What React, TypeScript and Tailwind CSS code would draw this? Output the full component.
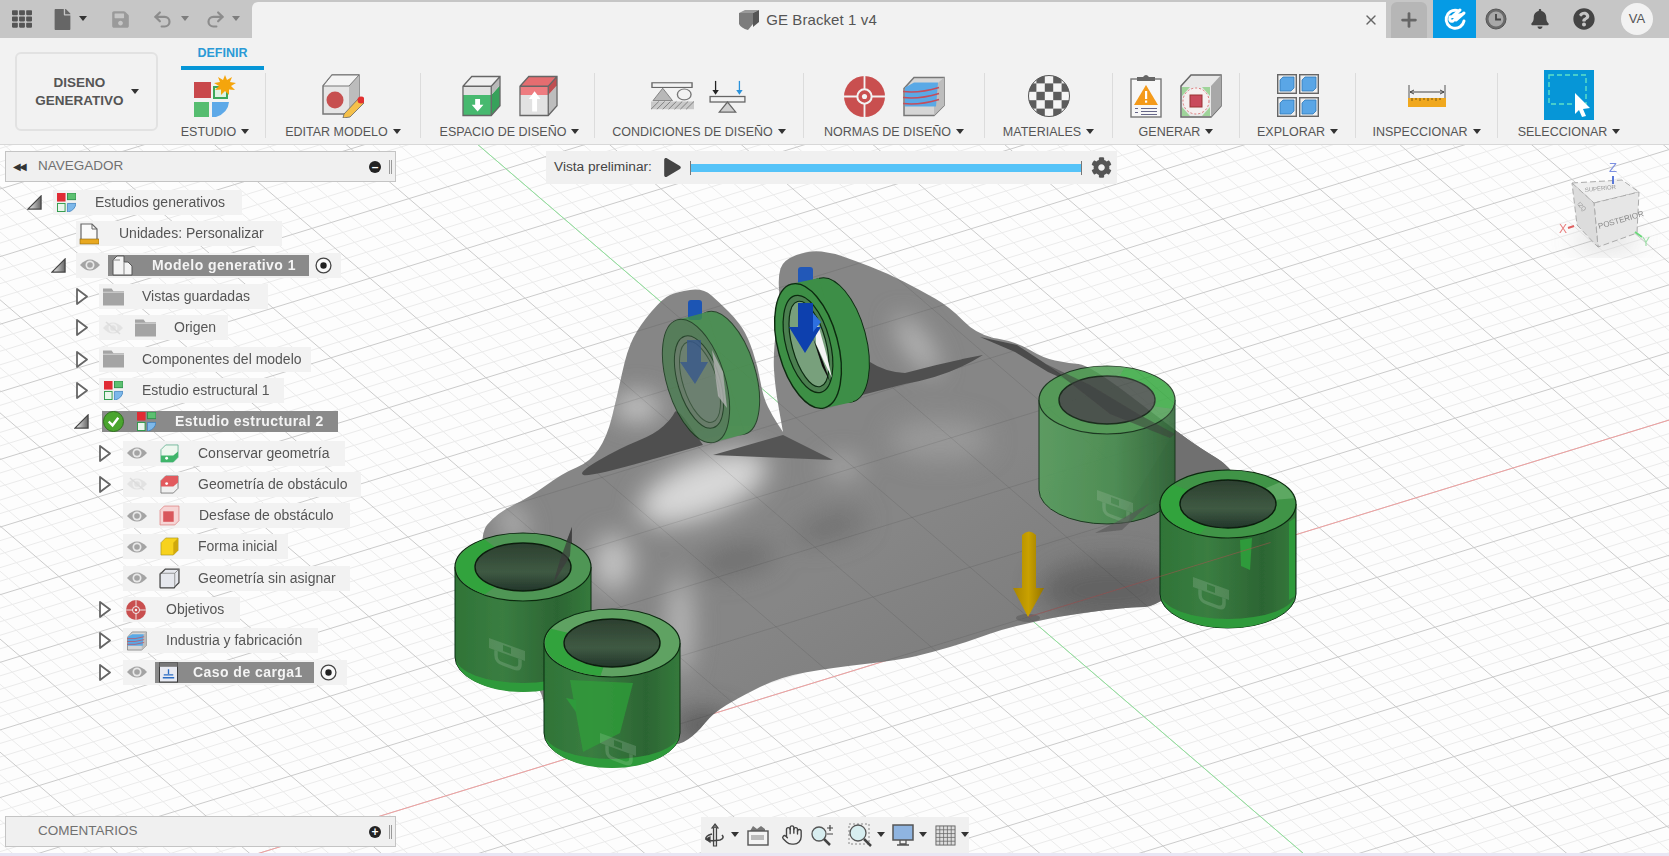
import { type ReactNode } from 'react';
import { Undo2, Redo2, Hand, X, Plus } from 'lucide-react';
import { FaBell, FaCog, FaFile, FaPlay, FaQuestionCircle, FaSave, FaTh } from 'react-icons/fa';

// ---------- ground grid, page coordinates ----------
const G = { x: 1028, y: 617 };
const U = { x: 58, y: 49.8 };
const V = { x: 97, y: -29.8 };

function gridPath(major: boolean) {
  let d = '';
  for (let i = -150; i <= 150; i++) {
    if ((i % 5 === 0) !== major) continue;
    const t = i / 5;
    const ax = G.x + t * U.x;
    const ay = G.y + t * U.y;
    d += `M${ax - 30 * V.x} ${ay - 30 * V.y}L${ax + 30 * V.x} ${ay + 30 * V.y}`;
    const bx = G.x + t * V.x;
    const by = G.y + t * V.y;
    d += `M${bx - 30 * U.x} ${by - 30 * U.y}L${bx + 30 * U.x} ${by + 30 * U.y}`;
  }
  return d;
}

// outline of the bracket; a point listed twice stays sharp
const BODY_PTS = [
  [477, 537], [497, 513], [530, 497], [563, 473], [590, 462], [607, 437], [617, 397], [627, 350], [640, 325],
  [663, 298], [677, 292], [703, 288], [720, 303], [737, 320], [748, 337], [758, 367], [763, 397], [773, 417],
  [783, 432], [783, 432], [775, 387], [773, 353], [780, 300], [778, 277], [783, 260], [810, 250], [833, 253],
  [853, 260], [887, 273], [920, 290], [950, 307], [977, 335], [1017, 342], [1043, 358], [1067, 363], [1090, 365],
  [1175, 430], [1200, 448], [1233, 468], [1260, 520], [1160, 607], [1130, 607], [1067, 615], [1033, 622],
  [1000, 630], [967, 642], [933, 652], [900, 660], [830, 668], [780, 677], [740, 697], [713, 713], [697, 733],
  [680, 745], [660, 745], [545, 727], [544, 690], [500, 640],
];

function smooth(pts: number[][]) {
  const mid = (a: number[], b: number[]) => `${(a[0] + b[0]) / 2} ${(a[1] + b[1]) / 2}`;
  let d = `M${mid(pts[0], pts[1])}`;
  for (let i = 1; i <= pts.length; i++) {
    const p = pts[i % pts.length];
    const n = pts[(i + 1) % pts.length];
    d += `Q${p[0]} ${p[1]} ${mid(p, n)}`;
  }
  return d + 'Z';
}

const BODY = smooth(BODY_PTS);

// a piece of a pad's top ring between two angles, in degrees, clockwise on screen
function ringArc(cx: number, cy: number, a0: number, a1: number) {
  const p = (rx: number, ry: number, a: number) => {
    const r = (a * Math.PI) / 180;
    return `${cx + rx * Math.cos(r)} ${cy + ry * Math.sin(r)}`;
  };
  const large = a1 - a0 > 180 ? 1 : 0;
  return `M${p(67, 33.5, a0)}A67 33.5 0 ${large} 1 ${p(67, 33.5, a1)}L${p(49, 24.5, a1)}A49 24.5 0 ${large} 0 ${p(49, 24.5, a0)}Z`;
}

// thin bright crescent along the foot of a pad
function footBand(cx: number, cy: number) {
  return `M${cx - 67} ${cy}A67 34 0 0 0 ${cx + 67} ${cy}A67 25 0 0 1 ${cx - 67} ${cy}Z`;
}

function Lock({ x, y }: { x: number; y: number }) {
  return (
    <g transform={`translate(${x} ${y}) skewY(20)`}>
      <path d="M0 0 H36 V10 H0 Z M14 2 V8 H22 V2 Z" fill="#fff" fillOpacity=".14" fillRule="evenodd" />
      <path d="M7 10 V15 Q7 21 14 21 H24 Q31 21 31 15 V10" fill="none" stroke="#fff" strokeOpacity=".15" strokeWidth="3.5" />
    </g>
  );
}

function Cylinder({
  cx,
  cy,
  top,
  side,
  hole = 'url(#holeFill)',
  patches,
  children,
}: {
  cx: number;
  cy: number;
  top: string;
  side: string;
  hole?: string;
  patches?: ReactNode;
  children?: ReactNode;
}) {
  const h = 90;
  return (
    <g>
      <path
        d={`M${cx - 68} ${cy} V${cy + h} A68 34 0 0 0 ${cx + 68} ${cy + h} V${cy} Z`}
        fill={side}
        stroke="#0d2e12"
        strokeWidth="1"
      />
      {children}
      <ellipse cx={cx} cy={cy} rx="68" ry="34" fill={top} stroke="#0c2a10" strokeWidth="1.2" />
      {patches}
      <ellipse cx={cx} cy={cy} rx="48" ry="24" fill={hole} stroke="#0b1f0e" strokeWidth="1.4" />
    </g>
  );
}

function Model() {
  return (
    <g>
      <path d={BODY} fill="url(#bodyFill)" />
      <g clipPath="url(#bodyClip)">
        <g filter="url(#soft)">
          <ellipse cx="637" cy="407" rx="24" ry="13" fill="#cfcfcf" />
          <ellipse cx="703" cy="488" rx="68" ry="28" fill="#d8d8d8" transform="rotate(-22 703 488)" />
          <ellipse cx="613" cy="563" rx="20" ry="28" fill="#c4c4c4" />
          <ellipse cx="513" cy="523" rx="9" ry="20" fill="#c4c4c4" transform="rotate(-25 513 523)" />
          <ellipse cx="680" cy="625" rx="10" ry="50" fill="#c6c6c6" />
          <ellipse cx="917" cy="345" rx="9" ry="34" fill="#c8c8c8" transform="rotate(-35 917 345)" />
          <ellipse cx="843" cy="467" rx="18" ry="8" fill="#bcbcbc" />
          <ellipse cx="737" cy="560" rx="40" ry="13" fill="#6c6c6c" transform="rotate(-12 737 560)" />
          <ellipse cx="830" cy="527" rx="36" ry="13" fill="#707070" transform="rotate(-15 830 527)" />
          <ellipse cx="1110" cy="590" rx="70" ry="30" fill="#646464" />
          <ellipse cx="703" cy="725" rx="30" ry="14" fill="#585858" />
          <ellipse cx="940" cy="440" rx="50" ry="20" fill="#9a9a9a" />
        </g>
        <path d={gridPath(true)} stroke="#000" strokeOpacity=".09" fill="none" />
        <path d={smooth([[577, 473], [590, 477], [703, 445], [703, 445], [677, 407], [672, 418], [655, 434], [620, 448]])} fill="#505050" />
        <path d="M713 455 L783 435 L833 460 Z" fill="#555" />
        <path d="M862 395 L905 384 Q950 376 983 355 Q945 362 905 373 Q885 372 870 362 Z" fill="#505050" />
        <path d="M980 337 L1017 345 L1043 362 L1075 384 L1048 372 L1015 352 Z" fill="#4c4c4c" />
        <path d="M572 527 L572 560 L550 585 Z" fill="#4c4c4c" />
        <path d="M1175 430 L1233 468 L1160 500 L1120 520 Z" fill="#707070" />
      </g>

      {/* back pad sits inside the body */}
      <g opacity=".86">
        <Cylinder
          cx={1107}
          cy={400}
          top="#4c9c52"
          side="url(#sideLight)"
          hole="#434b45"
          patches={<path d={ringArc(1107, 400, 285, 375)} fill="#35a83f" />}
        >
          <Lock x={1097} y={490} />
        </Cylinder>
      </g>
      <path d="M1046 364 L1090 385 L1140 415 L1175 434 L1170 438 L1110 414 Z" fill="#3c3c3c" opacity=".5" />
      <path d="M1095 533 L1120 520 L1150 503 L1122 530 Z" fill="#555" opacity=".6" />

      {/* blue stubs behind the lugs */}
      <rect x="688" y="300" width="14" height="20" rx="3" fill="#1f54b4" />
      <rect x="798" y="267" width="15" height="20" rx="3" fill="#2259b8" />

      {/* left lug, see-through */}
      <g opacity=".78">
        <ellipse cx="726" cy="373" rx="64" ry="29" transform="rotate(72.7 726 373)" fill="#3f9147" stroke="#0f3414" />
        <path d="M677 320 L707 312 L745 434 L715 442 Z" fill="#3f9147" />
        <ellipse cx="696" cy="381" rx="64" ry="29" transform="rotate(72.7 696 381)" fill="#4a7c4f" stroke="#0f3414" />
        <ellipse cx="699" cy="382" rx="48" ry="21" transform="rotate(72.7 699 382)" fill="#5f7a62" stroke="#0f3414" />
        <ellipse cx="700" cy="382" rx="42" ry="17" transform="rotate(72.7 700 382)" fill="#667f69" stroke="#2a4c2e" />
      </g>
      <path d="M712 350 L718 396 L727 408 L723 372 Z" fill="#b4b4b4" opacity=".8" />
      <path d="M687 340 H701 V362 H708 L695 384 L680 362 H687 Z" fill="#34568f" opacity=".75" />

      {/* right lug */}
      <ellipse cx="836" cy="340" rx="64" ry="30" transform="rotate(75 836 340)" fill="#3e8e46" stroke="#0d2e12" />
      <path d="M791 284 L819 278 L853 402 L825 408 Z" fill="#3e8e46" />
      <ellipse cx="808" cy="346" rx="64" ry="30" transform="rotate(75 808 346)" fill="#3d8f45" stroke="#0b2a10" strokeWidth="1.4" />
      <ellipse cx="808" cy="344" rx="50" ry="22" transform="rotate(75 808 344)" fill="#4b7f50" stroke="#0b2a10" strokeWidth="1.2" />
      <ellipse cx="809" cy="344" rx="44" ry="17" transform="rotate(75 809 344)" fill="#78a07c" stroke="#0b2a10" strokeWidth="1.2" />
      <path d="M815 315 Q826 350 832 378 Q824 362 816 344 Z" fill="#f4f4f4" />
      <path d="M813 338 Q824 362 830 382 L822 366 Z" fill="#111" />
      <path d="M798 303 H813 V327 H821 L805 353 L789 327 H798 Z" fill="#0f3fae" />
      <path d="M813 313 L821 322 L813 332 Z" fill="#2d6fe0" />

      <Cylinder
        cx={1228}
        cy={504}
        top="#3f9446"
        side="url(#sideDark)"
        patches={
          <>
            <path d={ringArc(1228, 504, 115, 215)} fill="#33a33d" />
            <path d={ringArc(1228, 504, 320, 350)} fill="#5da862" />
          </>
        }
      >
        <path d={footBand(1228, 594)} fill="#2f9a3a" />
        <path d="M1289 522 L1295 518 L1295 596 L1289 600 Z" fill="#2f9a3a" />
        <path d="M1240 540 L1252 538 L1250 570 L1241 566 Z" fill="#2f9a3a" />
        <Lock x={1193} y={577} />
      </Cylinder>

      <Cylinder
        cx={523}
        cy={567}
        top="#4f9654"
        side="url(#sideDark)"
        patches={<path d={ringArc(523, 567, 125, 235)} fill="#33a33d" />}
      >
        <path d={footBand(523, 658)} fill="#2f9a3a" />
        <Lock x={489} y={638} />
      </Cylinder>
      <path d="M572 527 L570 556 L553 584 L560 560 Z" fill="#3c3c3c" opacity=".7" />

      <Cylinder
        cx={612}
        cy={643}
        top="#5ea262"
        side="url(#sideDark)"
        patches={<path d={ringArc(612, 643, 100, 205)} fill="#33a33d" />}
      >
        <path d="M570 680 L633 683 L620 733 L583 752 Z" fill="#2f9a3a" opacity=".85" />
        <path d={footBand(612, 734)} fill="#2f9a3a" />
        <path d="M566 698 L576 700 L576 712 Z" fill="#2f9a3a" />
        <Lock x={600} y={733} />
      </Cylinder>

      {/* yellow load arrow */}
      <ellipse cx="1028" cy="618" rx="12" ry="4" fill="#555" opacity=".5" />
      <path d="M1022 535 Q1029 528 1036 535 V588 H1044 L1028 617 L1013 588 H1022 Z" fill="url(#gold)" />
    </g>
  );
}

function ViewCube() {
  return (
    <g>
      <ellipse cx="1606" cy="240" rx="34" ry="9" fill="#aaa" opacity=".45" filter="url(#soft)" />
      <path d="M1572 183 L1622 180 L1639 192 L1594 203 Z" fill="#efefef" stroke="#aaa" strokeDasharray="6 3" />
      <path d="M1594 203 L1639 192 L1637 233 L1598 247 Z" fill="#e6e6e6" stroke="#aaa" strokeDasharray="6 3" />
      <path d="M1572 183 L1594 203 L1598 247 L1577 225 Z" fill="#dcdcdc" stroke="#aaa" strokeDasharray="6 3" />
      <text x="1599" y="229" fontSize="8" fill="#888" transform="rotate(-16 1599 229)">POSTERIOR</text>
      <text x="1585" y="192" fontSize="6" fill="#999" transform="rotate(-6 1585 192)">SUPERIOR</text>
      <text x="1577" y="204" fontSize="6" fill="#999" transform="rotate(50 1577 204)">IZQ</text>
      <path d="M1613 176 V184" stroke="#5a78d8" strokeWidth="2" />
      <text x="1609" y="172" fontSize="13" fill="#7b8fe0">Z</text>
      <path d="M1574 226 L1568 228" stroke="#e06060" strokeWidth="2" />
      <text x="1559" y="233" fontSize="12" fill="#e88080">X</text>
      <path d="M1635 232 L1642 237" stroke="#6ad87a" strokeWidth="2" />
      <text x="1642" y="246" fontSize="12" fill="#9ee0a8">Y</text>
    </g>
  );
}

function Viewport3D() {
  return (
    <svg viewBox="0 145 1669 708" className="absolute inset-0 h-full w-full">
      <defs>
        <linearGradient id="bodyFill" x1="0" y1="0" x2="1" y2="1">
          <stop offset="0" stopColor="#868686" />
          <stop offset=".55" stopColor="#868686" />
          <stop offset="1" stopColor="#727272" />
        </linearGradient>
        <linearGradient id="sideLight" x1="0" y1="0" x2="1" y2="0">
          <stop offset="0" stopColor="#569f5c" />
          <stop offset=".55" stopColor="#478f4e" />
          <stop offset="1" stopColor="#2a6332" />
        </linearGradient>
        <linearGradient id="sideDark" x1="0" y1="0" x2="1" y2="0">
          <stop offset="0" stopColor="#2f7437" />
          <stop offset=".35" stopColor="#3a7d41" />
          <stop offset=".75" stopColor="#2c6533" />
          <stop offset="1" stopColor="#357a3c" />
        </linearGradient>
        <linearGradient id="holeFill" x1="0" y1="0" x2="0" y2="1">
          <stop offset="0" stopColor="#2c3f2f" />
          <stop offset=".6" stopColor="#3f5a43" />
          <stop offset="1" stopColor="#22352a" />
        </linearGradient>
        <linearGradient id="gold" x1="0" y1="0" x2="1" y2="0">
          <stop offset="0" stopColor="#a98500" />
          <stop offset=".5" stopColor="#c9a106" />
          <stop offset="1" stopColor="#947400" />
        </linearGradient>
        <filter id="soft" x="-50%" y="-50%" width="200%" height="200%">
          <feGaussianBlur stdDeviation="13" />
        </filter>
        <filter id="aa">
          <feGaussianBlur stdDeviation=".5" />
        </filter>
        <clipPath id="bodyClip">
          <path d={BODY} />
        </clipPath>
      </defs>
      <rect x="0" y="145" width="1669" height="711" fill="#fdfdfd" />
      <path d={gridPath(false)} stroke="#ebebeb" fill="none" />
      <path d={gridPath(true)} stroke="#cbcbcb" fill="none" />
      <path d={`M${G.x - 11 * U.x} ${G.y - 11 * U.y}L${G.x + 5 * U.x} ${G.y + 5 * U.y}`} stroke="#8fe39a" />
      <path d={`M${G.x - 10 * V.x} ${G.y - 10 * V.y}L${G.x + 10 * V.x} ${G.y + 10 * V.y}`} stroke="#f0a0a0" />
      <g filter="url(#aa)">
        <Model />
        <path d={`M${G.x} ${G.y}L${G.x + 2.5 * V.x} ${G.y + 2.5 * V.y}`} stroke="#b05050" strokeOpacity=".5" />
        <ViewCube />
      </g>
    </svg>
  );
}

// ---------- toolbar icons ----------
function StudyIcon() {
  return (
    <svg viewBox="0 0 42 42" className="h-[42px] w-[42px]">
      <rect x="0" y="7" width="17" height="16" fill="#c9494c" />
      <rect x="0" y="27" width="15" height="15" fill="#56bd70" />
      <path d="M18 27 H35 Q34 38 22 42 H18 Z" fill="#5da9e8" />
      <rect x="20" y="12" width="13" height="11" fill="#dff2e2" stroke="#3ea75a" strokeWidth="2" />
      <path d="M31 0 L33 5 L38 2 L36 7 L42 8 L37 11 L41 15 L35 14.500 L35 20 L31 16 L27 20 L27 14.500 L21 15 L25 11 L20 8 L26 7 L24 2 L29 5 Z" fill="#f5a50c" />
    </svg>
  );
}

function MiniStudy({ size = 'h-[19px] w-[19px]' }: { size?: string }) {
  return (
    <svg viewBox="0 0 20 20" className={size}>
      <rect x="0" y="0" width="9" height="9" fill="#e02b34" />
      <rect x="11" y="0" width="9" height="7" fill="#5cc070" stroke="#2f8f4a" />
      <rect x=".5" y="11" width="8" height="8.500" fill="#eaf6ec" stroke="#2f9a4a" />
      <path d="M11 11 H20 Q19 18 12 20 H11 Z" fill="#7db8ea" stroke="#3b7fbd" strokeWidth=".8" />
    </svg>
  );
}

function EditModelIcon() {
  return (
    <svg viewBox="0 0 42 44" className="h-[44px] w-[42px]">
      <path d="M1 12 L10 1 H37 V30 L27 40 H1 Z" fill="#e6e6e6" stroke="#777" strokeWidth="1.5" />
      <path d="M27 12 L37 1 V30 L27 40 Z" fill="#bcbcbc" />
      <path d="M1 12 H27 L37 1 H10 Z" fill="#f4f4f4" stroke="#777" />
      <circle cx="13" cy="26" r="8.500" fill="#c75050" />
      <path d="M22 40 L37 24 L42 29 L28 43 L21 44 Z" fill="#f5c04a" stroke="#666" strokeWidth=".8" />
      <circle cx="39" cy="26" r="3.500" fill="#e23030" />
    </svg>
  );
}

function SpaceIcon({ up }: { up?: boolean }) {
  const midY = 20;
  return (
    <svg viewBox="0 0 40 42" className="h-[42px] w-[39px]">
      <path d={`M1 ${midY} V41 H30 V${midY} Z`} fill={up ? '#e2e2e2' : '#47b96f'} />
      <path d={`M30 ${midY} V41 L39 31 V10 Z`} fill={up ? '#bdbdbd' : '#37a15b'} />
      <path d={`M1 ${midY} V11 H30 V${midY} Z`} fill={up ? '#ee7c80' : '#e2e2e2'} />
      <path d="M1 11 L10 1 H39 L30 11 Z" fill={up ? '#e56d70' : '#f0f0f0'} />
      <path d={`M30 11 L39 1 V10 L30 ${midY} Z`} fill={up ? '#bf4f52' : '#b9b9b9'} />
      <path d="M1 11 L10 1 H39 V31 L30 41 H1 Z M1 11 H30 V41 M30 11 L39 1" fill="none" stroke="#666" strokeWidth="1.3" />
      {up ? (
        <path d="M16 16 L22 24 H18.500 V37 H13.500 V24 H10 Z" fill="#fff" />
      ) : (
        <path d="M13.500 24 H18.500 V30 H22 L16 37 L10 30 H13.500 Z" fill="#fff" />
      )}
    </svg>
  );
}

function SupportIcon() {
  return (
    <svg viewBox="0 0 44 36" preserveAspectRatio="none" className="h-[28px] w-[43px]">
      <rect x="1" y="1" width="41" height="6" fill="#f2f2f2" stroke="#666" strokeWidth="1.4" />
      <path d="M12 8 L2 24 H22 Z" fill="#b8b8b8" stroke="#777" />
      <circle cx="34" cy="16" r="7" fill="#f2f2f2" stroke="#777" strokeWidth="1.4" />
      <rect x="0" y="25" width="44" height="10" fill="#c9c9c9" />
      <path d="M0 35 L8 25 M6 35 L14 25 M12 35 L20 25 M18 35 L26 25 M24 35 L32 25 M30 35 L38 25 M36 35 L44 25" stroke="#777" />
    </svg>
  );
}

function LoadIcon() {
  return (
    <svg viewBox="0 0 40 36" className="-ml-[4px] h-[33px] w-[39px]">
      <path d="M7 1 V13" stroke="#222" strokeWidth="1.4" />
      <path d="M3.500 11 H10.500 L7 16 Z" fill="#222" />
      <path d="M33 1 V13" stroke="#2a93dc" strokeWidth="1.4" />
      <path d="M29.500 11 H36.500 L33 16 Z" fill="#2a93dc" />
      <rect x="1" y="18" width="38" height="6" fill="#f2f2f2" stroke="#666" strokeWidth="1.4" />
      <path d="M20 24 L11 35 H29 Z" fill="#cfcfcf" stroke="#666" strokeWidth="1.3" />
    </svg>
  );
}

function TargetIcon({ size = 'h-[41px] w-[41px]' }: { size?: string }) {
  return (
    <svg viewBox="0 0 40 40" className={size}>
      <circle cx="20" cy="20" r="20" fill="#c94f4f" />
      <path d="M20 0 V40 M0 20 H40" stroke="#f2f2f2" strokeWidth="1.8" />
      <circle cx="20" cy="20" r="7" fill="#c94f4f" stroke="#f2f2f2" strokeWidth="2" />
      <circle cx="20" cy="20" r="2.500" fill="#f2f2f2" />
    </svg>
  );
}

function LayersIcon({ size = 'h-[41px] w-[42px]' }: { size?: string }) {
  return (
    <svg viewBox="0 0 42 40" className={size}>
      <path d="M1 12 L11 1 H41 V29 L31 39 H1 Z" fill="#d6d6d6" stroke="#777" strokeWidth="1.5" />
      <path d="M31 10 L41 1 V29 L31 39 Z" fill="#bdbdbd" />
      <path d="M2 11 L11 6 H35 L33 30 H2 Z" fill="#5aa9e6" />
      <path d="M0 15 Q16 17 36 11 M0 21 Q16 23 36 17 M0 27 Q16 29 36 23" stroke="#c44d5c" strokeWidth="1.5" fill="none" />
    </svg>
  );
}

function CheckerIcon() {
  const cells = [];
  for (let r = 0; r < 5; r++) {
    for (let c = 0; c < 5; c++) {
      if ((r + c) % 2 === 1) cells.push(<rect key={`${r}-${c}`} x={c * 8.4} y={r * 8.4} width="8.400" height="8.400" fill="#5c5c5c" />);
    }
  }
  return (
    <svg viewBox="0 0 42 42" className="h-[42px] w-[42px]">
      <clipPath id="ball">
        <circle cx="21" cy="21" r="20.500" />
      </clipPath>
      <g clipPath="url(#ball)">
        <rect width="42" height="42" fill="#f4f4f4" />
        {cells}
      </g>
      <circle cx="21" cy="21" r="20.500" fill="none" stroke="#555" />
    </svg>
  );
}

function ReportIcon() {
  return (
    <svg viewBox="0 0 32 44" className="h-[44px] w-[32px]">
      <rect x="1" y="5" width="30" height="38" fill="#f7f7f7" stroke="#777" strokeWidth="1.4" />
      <path d="M7 3 H13 Q16 -1 19 3 H25 V7 H7 Z" fill="#666" />
      <path d="M16 11 L28 31 H4 Z" fill="#f49a1a" />
      <rect x="15" y="17" width="2.200" height="8" fill="#fff" />
      <rect x="15" y="26.500" width="2.200" height="2.200" fill="#fff" />
      <path d="M11 34.500 H27 M11 37.500 H27 M11 40.500 H27 M5 34.500 H8 M5 38.500 H8" stroke="#668" strokeWidth="1" />
    </svg>
  );
}

function GenerateIcon() {
  return (
    <svg viewBox="0 0 42 44" className="h-[44px] w-[42px]">
      <path d="M1 12 L11 1 H41 V32 L31 43 H1 Z" fill="#e8e8e8" stroke="#666" strokeWidth="1.5" />
      <path d="M31 12 L41 1 V32 L31 43 Z" fill="#a8a8a8" />
      <path d="M2 13 H10 L2 22 Z M30 13 H22 L30 22 Z M2 42 H10 L2 33 Z M30 42 H22 L30 33 Z" fill="#9fd49a" />
      <circle cx="16" cy="27" r="13" fill="#f5f0f0" stroke="#d77" strokeDasharray="2 2" />
      <rect x="10" y="21" width="12" height="12" fill="#c94a5c" stroke="#933" />
    </svg>
  );
}

function ExploreIcon() {
  const tile = (x: number, y: number) => (
    <g key={`${x}${y}`} transform={`translate(${x} ${y})`}>
      <rect x=".7" y=".7" width="18.600" height="18.600" fill="#efefef" stroke="#666" strokeWidth="1.4" />
      <path d="M3 6 L6 3 H17 V14 L14 17 H3 Z" fill="#5aa6e6" stroke="#2f78b8" strokeWidth=".8" />
    </g>
  );
  return (
    <svg viewBox="0 0 42 44" className="h-[44px] w-[42px]">
      {tile(0, 0)}
      {tile(22, 0)}
      {tile(0, 23)}
      {tile(22, 23)}
    </svg>
  );
}

function MeasureIcon() {
  return (
    <svg viewBox="0 0 38 22" className="h-[22px] w-[38px]">
      <path d="M1 0 V13 M37 0 V13" stroke="#555" />
      <path d="M2 7 H36 M2 7 L6 5 M2 7 L6 9 M36 7 L32 5 M36 7 L32 9" stroke="#444" fill="none" />
      <rect x="0" y="13" width="38" height="9" fill="#f0a81e" />
      <path d="M4 13 V16 M8 13 V15 M12 13 V16 M16 13 V15 M20 13 V16 M24 13 V15 M28 13 V16 M32 13 V15" stroke="#7a5a10" />
    </svg>
  );
}

function SelectIcon() {
  return (
    <svg viewBox="0 0 50 50" className="-mt-[2px] h-[50px] w-[50px]">
      <rect width="50" height="50" fill="#0696d7" />
      <rect x="5" y="5" width="37" height="29" fill="none" stroke="#5fe0c8" strokeWidth="1.4" strokeDasharray="5 3" />
      <path d="M31 24 L46 39 L39 40 L42 47 L38 48 L35 41 L31 45 Z" fill="#fff" transform="translate(0 -1)" />
    </svg>
  );
}

// ---------- small tree icons ----------
function TriDown() {
  return (
    <svg viewBox="0 0 16 16" className="h-[15px] w-[15px] shrink-0">
      <defs>
        <linearGradient id="tri" x1="0" y1="0" x2="1" y2="0">
          <stop offset="0" stopColor="#f4f4f4" />
          <stop offset="1" stopColor="#666" />
        </linearGradient>
      </defs>
      <path d="M1 15 L15 1 V15 Z" fill="url(#tri)" stroke="#444" strokeWidth="1.3" />
    </svg>
  );
}

function Chevron() {
  return (
    <svg viewBox="0 0 12 17" className="h-[17px] w-[12px] shrink-0">
      <path d="M1 1 L11 8.500 L1 16 Z" fill="#fff" stroke="#666" strokeWidth="1.8" strokeLinejoin="round" />
    </svg>
  );
}

function Eye({ off }: { off?: boolean }) {
  return (
    <svg viewBox="0 0 20 14" className={`h-[14px] w-[20px] shrink-0 ${off ? 'opacity-20' : ''}`}>
      <path d="M0 7 Q10 -4 20 7 Q10 18 0 7 Z" fill="#a4a4a4" />
      <circle cx="10" cy="7" r="4.500" fill="#e8e8e8" />
      <circle cx="10" cy="7" r="2.800" fill="#a4a4a4" />
      {off && <path d="M3 1 L17 13" stroke="#888" strokeWidth="1.6" />}
    </svg>
  );
}

function Radio() {
  return (
    <svg viewBox="0 0 16 16" className="h-[17px] w-[17px] shrink-0">
      <circle cx="8" cy="8" r="7" fill="#fafafa" stroke="#444" strokeWidth="1.2" />
      <circle cx="8" cy="8" r="3" fill="#222" />
    </svg>
  );
}

function Folder() {
  return (
    <svg viewBox="0 0 22 18" className="h-[18px] w-[21px] shrink-0">
      <path d="M0 0 H9 L11 3 H22 V18 H0 Z" fill="#a4a4a4" />
      <path d="M0 4 H22" stroke="#d8d8d8" />
    </svg>
  );
}

function Tiny({ kind }: { kind: 'keep' | 'obst' | 'offset' | 'start' | 'free' }) {
  if (kind === 'offset') {
    return (
      <svg viewBox="0 0 20 20" className="h-[21px] w-[21px] shrink-0">
        <path d="M1 5 L5 1 H19 V15 L15 19 H1 Z" fill="#f6d5d5" stroke="#e08a8a" strokeWidth=".8" />
        <rect x="4" y="6" width="10" height="10" fill="#d9575c" />
      </svg>
    );
  }
  if (kind === 'start') {
    return (
      <svg viewBox="0 0 20 20" className="h-[19px] w-[19px] shrink-0">
        <path d="M1 6 L6 1 H19 V14 L14 19 H1 Z" fill="#f7d21d" stroke="#99881a" strokeWidth=".6" />
        <path d="M14 6 L19 1 V14 L14 19 Z" fill="#d0a80d" />
      </svg>
    );
  }
  if (kind === 'free') {
    return (
      <svg viewBox="0 0 20 20" className="h-[21px] w-[21px] shrink-0">
        <path d="M1 6 Q1 5 2 5 L6 1 H19 V14 L15 18 Q15 19 14 19 H2 Q1 19 1 18 Z" fill="#e6e8ee" stroke="#444" strokeWidth="1.2" />
        <path d="M15 5 L19 1 M15 5 V18 M15 5 H1" fill="none" stroke="#777" strokeWidth=".7" />
      </svg>
    );
  }
  const keep = kind === 'keep';
  return (
    <svg viewBox="0 0 20 20" className="h-[19px] w-[19px] shrink-0">
      <path d="M1 6 L6 1 H19 V14 L14 19 H1 Z" fill={keep ? '#eef7ef' : '#f0f0f0'} stroke={keep ? '#5a8' : '#666'} strokeWidth=".8" />
      <path d={keep ? 'M1 12 H14 V19 H1 Z M14 12 L19 8 V14 L14 19 Z' : 'M1 6 H14 V12 H1 Z M1 6 L6 1 H19 L14 6 Z M14 6 L19 1 V8 L14 12 Z'} fill={keep ? '#3fb56a' : '#e25a5e'} />
      <circle cx="7" cy={keep ? 15 : 9} r="1.500" fill="#fff" />
    </svg>
  );
}

// ---------- tree rows ----------
function Row({ className, children }: { className: string; children: ReactNode }) {
  return <div className={`flex h-[31.3px] items-center ${className}`}>{children}</div>;
}

function Pill({ className, children }: { className: string; children: ReactNode }) {
  return <div className={`flex h-[25px] items-center bg-[#f2f2f2] text-[14px] text-[#555] ${className}`}>{children}</div>;
}

function Active({ className, children }: { className: string; children: ReactNode }) {
  return <div className={`flex h-[21px] items-center bg-[#8a8a8a] text-[14px] font-bold tracking-[0.45px] text-[#f4f4f4] ${className}`}>{children}</div>;
}

function Caret({ className = 'ml-[5px]' }: { className?: string }) {
  return <span className={`inline-block h-0 w-0 -translate-y-px border-x-[4px] border-t-[5px] border-x-transparent border-t-[#333] ${className}`} />;
}

function Group({ className, label, children }: { className: string; label: string; children: ReactNode }) {
  return (
    <div className={`flex h-[65px] flex-col items-center border-r border-[#dcdcdc] ${className}`}>
      <div className="flex h-[46px] shrink-0 items-center gap-[18px]">{children}</div>
      <div className="mt-[5px] flex h-[17px] shrink-0 items-center text-[12.5px] whitespace-nowrap text-[#555]">
        {label}
        <Caret />
      </div>
    </div>
  );
}

function TopBar() {
  return (
    <div className="flex h-[38px] shrink-0 items-stretch bg-[#c6c6c6] text-[#666]">
      <div className="flex w-[252px] items-center">
        <FaTh className="ml-[12px] h-[20px] w-[20px] text-[#555]" />
        <FaFile className="ml-[22px] h-[21px] w-[17px] text-[#666]" />
        <Caret className="ml-[8px] text-[#555]" />
        <FaSave className="ml-[24px] h-[19px] w-[19px] text-[#9a9a9a]" />
        <Undo2 className="ml-[22px] h-[21px] w-[21px] text-[#8c8c8c]" strokeWidth={2.5} />
        <Caret className="ml-[8px] opacity-50" />
        <Redo2 className="ml-[16px] h-[21px] w-[21px] text-[#8c8c8c]" strokeWidth={2.5} />
        <Caret className="ml-[6px] opacity-50" />
      </div>
      <div className="mt-[2px] flex w-[1134px] items-center rounded-tl-md bg-[#f2f2f2] pr-[7px]">
        <div className="flex flex-1 items-center justify-center gap-[6px] text-[15px] tracking-[0.1px] text-[#555]">
          <svg viewBox="0 0 22 20" className="h-[20px] w-[22px]">
            <path d="M1 3 L7 0 H21 L15 3 Z" fill="#9a9a9a" />
            <path d="M1 3 H15 V14 L10 20 Q3 18 1 14 Z" fill="#7c7c7c" />
            <path d="M15 3 L21 0 V12 L15 17 Z" fill="#555" />
          </svg>
          GE Bracket 1 v4
        </div>
        <X className="h-[16px] w-[16px] text-[#666]" strokeWidth={2} />
      </div>
      <div className="mt-[2px] ml-[5px] flex w-[36px] items-center justify-center rounded-t-md bg-[#b6b6b6]">
        <Plus className="h-[22px] w-[22px] text-[#666]" strokeWidth={3} />
      </div>
      <div className="ml-[6px] flex w-[43px] items-center justify-center bg-[#059be5]">
        <svg viewBox="0 0 24 24" className="h-[24px] w-[24px]" fill="none" stroke="#fff" strokeWidth="3" strokeLinecap="round">
          <path d="M14 3.500 A9 9 0 1 0 21 14" />
          <path d="M10 9 L17 3 M13 13 L21 6 M16 8 L10 14 Q6 15 7 10 Z" />
        </svg>
      </div>
      <div className="ml-[9px] flex items-center">
        <svg viewBox="0 0 22 22" className="h-[22px] w-[22px]">
          <circle cx="11" cy="11" r="10" fill="#6a6a6a" stroke="#555" />
          <circle cx="11" cy="11" r="7.500" fill="#a8a8a8" />
          <path d="M11 6 V11.500 H16" fill="none" stroke="#444" strokeWidth="1.800" />
        </svg>
        <FaBell className="ml-[23px] h-[20px] w-[20px] text-[#444]" />
        <FaQuestionCircle className="ml-[23px] h-[22px] w-[22px] text-[#444]" />
        <div className="ml-[26px] flex h-[32px] w-[32px] items-center justify-center rounded-full bg-[#f2f2f2] text-[13px] text-[#555]">VA</div>
      </div>
    </div>
  );
}

function Toolbar() {
  return (
    <div className="flex h-[107px] shrink-0 border-b border-[#d8d8d8] bg-[#f2f2f2]">
      <div className="w-[165px] shrink-0 pt-[14px] pl-[15px]">
        <div className="relative flex h-[79px] w-[143px] items-center rounded-md border-2 border-[#e2e2e2] pr-[14px] text-center text-[13.5px] leading-[18px] font-bold text-[#555]">
          <div className="flex-1">
            DISENO
            <br />
            GENERATIVO
          </div>
          <span className="absolute top-[35px] right-[17px] h-0 w-0 border-x-[4px] border-t-[5px] border-x-transparent border-t-[#333]" />
        </div>
      </div>
      <div className="flex-1">
        <div className="ml-[16px] flex h-[32px] w-[83px] flex-col items-center justify-between">
          <span className="pt-[6px] text-[12.5px] font-bold text-[#2a9ad6]">DEFINIR</span>
          <span className="h-[4px] w-full bg-[#0696d7]" />
        </div>
        <div className="mt-[3px] flex">
          <Group className="w-[101px]" label="ESTUDIO">
            <StudyIcon />
          </Group>
          <Group className="w-[155px]" label="EDITAR MODELO">
            <EditModelIcon />
          </Group>
          <Group className="w-[174px] pl-[4px]" label="ESPACIO DE DISEÑO">
            <SpaceIcon />
            <SpaceIcon up />
          </Group>
          <Group className="w-[209px]" label="CONDICIONES DE DISEÑO">
            <SupportIcon />
            <LoadIcon />
          </Group>
          <Group className="w-[181px]" label="NORMAS DE DISEÑO">
            <TargetIcon />
            <LayersIcon />
          </Group>
          <Group className="w-[128px]" label="MATERIALES">
            <CheckerIcon />
          </Group>
          <Group className="w-[127px]" label="GENERAR">
            <ReportIcon />
            <GenerateIcon />
          </Group>
          <Group className="w-[116px]" label="EXPLORAR">
            <ExploreIcon />
          </Group>
          <Group className="w-[142px]" label="INSPECCIONAR">
            <MeasureIcon />
          </Group>
          <Group className="w-[142px] border-r-0" label="SELECCIONAR">
            <SelectIcon />
          </Group>
        </div>
      </div>
    </div>
  );
}

function PanelHeader({ label, sign, back }: { label: string; sign: string; back?: boolean }) {
  return (
    <div className="ml-[5px] flex h-[31px] w-[391px] items-center border border-[#c4c4c4] bg-[#f0f0f0] text-[13.5px] text-[#707070]">
      <span className={`ml-[7px] w-[20px] text-[10px] tracking-[-2px] text-[#333] ${back ? '' : 'opacity-0'}`}>◀◀</span>
      <span className="ml-[5px] flex-1">{label}</span>
      <span className="flex h-[12px] w-[12px] items-center justify-center rounded-full bg-[#222] text-[12px] leading-none font-bold text-white">{sign}</span>
      <span className="mr-[3px] ml-[8px] h-[14px] w-[3px] border-x border-[#999]" />
    </div>
  );
}

function Navigator() {
  return (
    <div className="w-[400px]">
      <PanelHeader label="NAVEGADOR" sign="–" back />
      <div className="mt-[5px]">
        <Row className="pl-[27px]">
          <TriDown />
          <Pill className="ml-[11px] w-[189px] pl-[4px]">
            <MiniStudy />
            <span className="ml-[19px]">Estudios generativos</span>
          </Pill>
        </Row>
        <Row className="pl-[76px]">
          <Pill className="w-[206px] pl-[3px]">
            <svg viewBox="0 0 20 22" className="h-[22px] w-[20px] shrink-0">
              <path d="M2 1 H13 L18 6 V17 H2 Z" fill="#fafafa" stroke="#666" strokeWidth="1.2" />
              <path d="M13 1 V6 H18" fill="none" stroke="#666" />
              <rect x="1" y="16" width="19" height="5" fill="#e8a820" stroke="#8a6510" strokeWidth=".6" />
            </svg>
            <span className="ml-[20px]">Unidades: Personalizar</span>
          </Pill>
        </Row>
        <Row className="pl-[51px]">
          <TriDown />
          <Pill className="ml-[10px] w-[265px] pl-[4px]">
            <Eye />
            <Active className="ml-[8px] w-[201px] pl-[4px]">
              <svg viewBox="0 0 21 21" className="h-[21px] w-[21px] shrink-0">
                <path d="M1 5 L5 1 H12 V7 H16 L20 11 V20 H1 Z" fill="#f4f4f4" stroke="#555" />
                <path d="M12 7 V20 M1 5 H8" stroke="#888" fill="none" />
              </svg>
              <span className="ml-[19px]">Modelo generativo 1</span>
            </Active>
            <span className="ml-[6px]">
              <Radio />
            </span>
          </Pill>
        </Row>
        <Row className="pl-[76px]">
          <Chevron />
          <Pill className="ml-[11px] w-[169px] pl-[4px]">
            <Folder />
            <span className="ml-[18px]">Vistas guardadas</span>
          </Pill>
        </Row>
        <Row className="pl-[76px]">
          <Chevron />
          <Pill className="ml-[11px] w-[129px] pl-[4px]">
            <Eye off />
            <span className="ml-[12px]">
              <Folder />
            </span>
            <span className="ml-[18px]">Origen</span>
          </Pill>
        </Row>
        <Row className="pl-[76px]">
          <Chevron />
          <Pill className="ml-[11px] w-[212px] pl-[4px]">
            <Folder />
            <span className="ml-[18px]">Componentes del modelo</span>
          </Pill>
        </Row>
        <Row className="pl-[76px]">
          <Chevron />
          <Pill className="ml-[11px] w-[185px] pl-[5px]">
            <MiniStudy />
            <span className="ml-[19px]">Estudio estructural 1</span>
          </Pill>
        </Row>
        <Row className="pl-[74px]">
          <TriDown />
          <Active className="ml-[13px] w-[236px] pl-[1px]">
            <svg viewBox="0 0 22 22" className="h-[21px] w-[21px] shrink-0">
              <circle cx="11" cy="11" r="10.500" fill="#4aa52e" stroke="#2e6f1c" />
              <path d="M6 11 L10 15 L16 7" fill="none" stroke="#fff" strokeWidth="2.500" />
            </svg>
            <span className="ml-[13px]">
              <MiniStudy />
            </span>
            <span className="ml-[19px]">Estudio estructural 2</span>
          </Active>
        </Row>
        <Row className="pl-[99px]">
          <Chevron />
          <Pill className="ml-[12px] w-[222px] pl-[4px]">
            <Eye />
            <span className="ml-[13px]">
              <Tiny kind="keep" />
            </span>
            <span className="ml-[19px]">Conservar geometría</span>
          </Pill>
        </Row>
        <Row className="pl-[99px]">
          <Chevron />
          <Pill className="ml-[12px] w-[238px] pl-[4px]">
            <Eye off />
            <span className="ml-[13px]">
              <Tiny kind="obst" />
            </span>
            <span className="ml-[19px]">Geometría de obstáculo</span>
          </Pill>
        </Row>
        <Row className="pl-[123px]">
          <Pill className="w-[227px] pl-[4px]">
            <Eye />
            <span className="ml-[12px]">
              <Tiny kind="offset" />
            </span>
            <span className="ml-[19px]">Desfase de obstáculo</span>
          </Pill>
        </Row>
        <Row className="pl-[123px]">
          <Pill className="w-[165px] pl-[4px]">
            <Eye />
            <span className="ml-[13px]">
              <Tiny kind="start" />
            </span>
            <span className="ml-[19px]">Forma inicial</span>
          </Pill>
        </Row>
        <Row className="pl-[123px]">
          <Pill className="w-[227px] pl-[4px]">
            <Eye />
            <span className="ml-[12px]">
              <Tiny kind="free" />
            </span>
            <span className="ml-[18px]">Geometría sin asignar</span>
          </Pill>
        </Row>
        <Row className="pl-[99px]">
          <Chevron />
          <Pill className="ml-[12px] w-[117px] pl-[3px]">
            <TargetIcon size="h-[20px] w-[20px] shrink-0" />
            <span className="ml-[20px]">Objetivos</span>
          </Pill>
        </Row>
        <Row className="pl-[99px]">
          <Chevron />
          <Pill className="ml-[12px] w-[195px] pl-[4px]">
            <LayersIcon size="h-[20px] w-[20px] shrink-0" />
            <span className="ml-[19px]">Industria y fabricación</span>
          </Pill>
        </Row>
        <Row className="pl-[99px]">
          <Chevron />
          <Pill className="ml-[12px] w-[224px] pl-[4px]">
            <Eye />
            <Active className="ml-[8px] w-[159px] pl-[4px]">
              <svg viewBox="0 0 20 21" className="h-[21px] w-[19px] shrink-0">
                <rect x=".5" y=".5" width="19" height="20" fill="#e8eaf2" stroke="#333" />
                <rect x=".5" y=".5" width="19" height="4" fill="#777" />
                <path d="M10 7 V12 M5 13 H15 M4 16 H16" stroke="#2b6cc4" strokeWidth="1.400" />
              </svg>
              <span className="ml-[15px]">Caso de carga1</span>
            </Active>
            <span className="ml-[6px]">
              <Radio />
            </span>
          </Pill>
        </Row>
      </div>
    </div>
  );
}

function PreviewBar() {
  return (
    <div className="absolute top-[6px] left-[546px] flex h-[33px] w-[571px] items-center bg-[#f0f0f0] pl-[8px] text-[13.7px] text-[#444]">
      <span className="w-[110px] whitespace-nowrap">Vista preliminar:</span>
      <FaPlay className="h-[19px] w-[17px] text-[#444]" />
      <span className="ml-[9px] h-[14px] w-px bg-[#777]" />
      <span className="h-[8px] w-[390px] bg-[#55c3f8]" />
      <span className="h-[14px] w-px bg-[#777]" />
      <FaCog className="ml-[9px] h-[21px] w-[21px] text-[#555]" />
    </div>
  );
}

function NavTools() {
  return (
    <div className="absolute bottom-0 left-[701px] flex h-[36px] w-[268px] items-center bg-[#f0f0f0] pl-[3px] text-[#444]">
      <svg viewBox="0 0 22 24" className="h-[24px] w-[22px]" fill="none" stroke="#444" strokeWidth="1.200">
        <path d="M11 1 L8 5 H14 Z" fill="#777" />
        <path d="M9.500 5 V23 H12.500 V5" fill="#ddd" />
        <path d="M8 11 Q1 13 2 16 Q5 19 16 17 Q21 15 18 12" strokeWidth="1.600" />
        <path d="M2 16 L6 14 V19 Z" fill="#333" />
      </svg>
      <Caret />
      <svg viewBox="0 0 22 22" className="ml-[8px] h-[22px] w-[22px]">
        <path d="M3 7 L6 2 L10 5 L14 2 L18 5 V7 Z" fill="#777" />
        <rect x="1" y="7" width="20" height="14" fill="#f4f4f4" stroke="#555" strokeWidth="1.400" />
        <rect x="4" y="11" width="13" height="5" fill="#bbb" />
      </svg>
      <Hand className="ml-[12px] h-[22px] w-[22px] text-[#444]" strokeWidth={1.5} />
      <svg viewBox="0 0 24 22" className="ml-[7px] h-[22px] w-[24px]">
        <circle cx="9" cy="10" r="7" fill="#d8eef0" stroke="#555" strokeWidth="1.300" />
        <path d="M14 15 L20 21" stroke="#444" strokeWidth="2.500" />
        <path d="M17 4 H23 M20 1 V7 M17 10 H23" stroke="#444" strokeWidth="1.200" />
      </svg>
      <svg viewBox="0 0 24 24" className="ml-[14px] h-[24px] w-[24px]">
        <rect x="1" y="1" width="20" height="20" fill="none" stroke="#888" strokeDasharray="2 2" />
        <circle cx="10" cy="10" r="8" fill="#d8eef0" stroke="#555" strokeWidth="1.300" />
        <path d="M16 16 L23 23" stroke="#444" strokeWidth="2.500" />
      </svg>
      <Caret />
      <svg viewBox="0 0 22 22" className="ml-[7px] h-[22px] w-[22px]">
        <rect x="1" y="1" width="20" height="15" fill="#8fb4e0" stroke="#555" strokeWidth="1.500" />
        <path d="M8 16 V20 H14 V16 M5 21 H17" fill="none" stroke="#555" strokeWidth="1.300" />
      </svg>
      <Caret />
      <svg viewBox="0 0 22 22" className="ml-[8px] h-[21px] w-[21px]">
        <rect x="1" y="1" width="20" height="20" fill="#ddd" stroke="#666" />
        <path d="M5 1 V21 M9 1 V21 M13 1 V21 M17 1 V21 M1 5 H21 M1 9 H21 M1 13 H21 M1 17 H21" stroke="#666" strokeWidth=".8" />
      </svg>
      <Caret />
    </div>
  );
}

export default function App() {
  return (
    <div className="flex h-[856px] w-[1669px] flex-col overflow-hidden font-['Liberation_Sans',Arial,sans-serif]">
      <TopBar />
      <Toolbar />
      <div className="relative flex-1 overflow-hidden bg-white">
        <Viewport3D />
        <div className="relative flex h-full flex-col justify-between pt-[6px] pb-[6px]">
          <Navigator />
          <PanelHeader label="COMENTARIOS" sign="+" />
        </div>
        <PreviewBar />
        <NavTools />
      </div>
      <div className="h-[3px] shrink-0 bg-[#e8e6f4]" />
    </div>
  );
}
